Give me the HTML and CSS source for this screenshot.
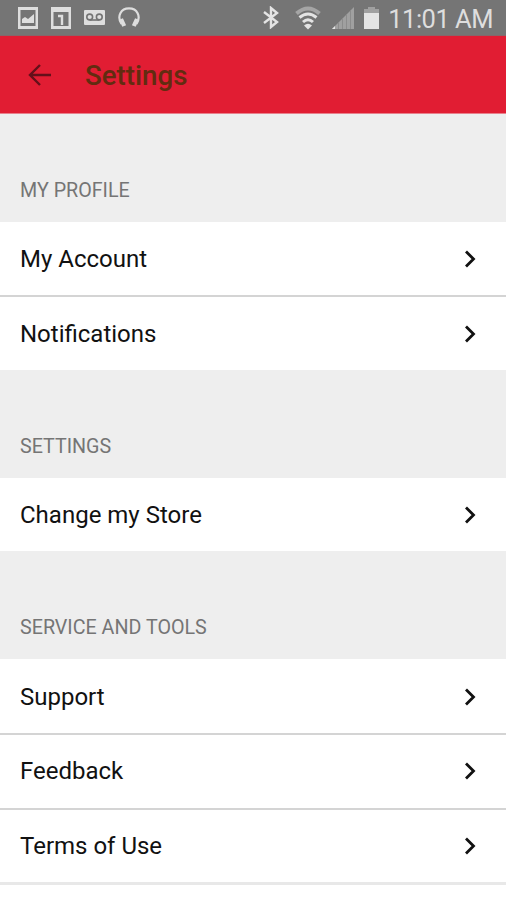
FILE: index.html
```html
<!DOCTYPE html>
<html lang="en">
<head>
  <meta charset="UTF-8" />
  <meta name="viewport" content="width=device-width, initial-scale=1.0"/>
  <title>Settings</title>
  <link rel="stylesheet" href="styles.css">
</head>
<body>
  <div class="status-bar">
    <div class="status-left">
      <svg width="20" height="22" viewBox="0 0 20 22"><path fill="#dedede" fill-rule="evenodd" d="M0 0h20v22H0zM2.5 3v16h15V3z"/><path fill="#dedede" d="M4 16v-4l3-2 3 2 6-5v9z"/></svg>
      <svg width="20" height="22" viewBox="0 0 20 22"><path fill="#dedede" fill-rule="evenodd" d="M0 0h20v22H0zM2.5 5v14h15V5z"/><path fill="none" stroke="#dedede" stroke-width="2.4" d="M7 9h4v9"/></svg>
      <svg width="21" height="15" viewBox="0 0 21 15"><rect width="21" height="15" rx="1" fill="#dedede"/><g fill="none" stroke="#737373" stroke-width="1.6"><circle cx="5.7" cy="7" r="2.9"/><circle cx="15.3" cy="7" r="2.9"/><path d="M5.700 10h9.600"/></g></svg>
      <svg width="22" height="21" viewBox="0 0 22 21"><path fill="none" stroke="#dedede" stroke-width="2.2" d="M3.5 17C-1.5 9 3 1.4 11 1.4S23.5 9 18.5 17"/><path fill="none" stroke="#dedede" stroke-width="4.2" d="M3 12l3.200 7M19 12l-3.200 7"/></svg>
    </div>
    <div class="status-right">
      <svg class="bluetooth" width="16" height="23" viewBox="0 0 16 23"><path fill="none" stroke="#e4e4e4" stroke-width="2.4" d="M1 6l13 10-6 5V2l6 5L1 17"/></svg>
      <svg class="wifi" width="26" height="24" viewBox="0 0 26 24"><g fill="none" stroke="#e4e4e4" stroke-width="3"><path stroke="#a5a5a5" stroke-width="4" d="M1.500 7.500q11.500-10 23 0"/><path d="M4.500 11.500q8.500-7 17 0M8 16q5-4.500 10 0"/></g><path fill="#e4e4e4" d="M9 19.500q4-3.500 8 0l-4 4z"/></svg>
      <svg class="signal" width="22" height="22" viewBox="0 0 22 22"><path fill="#a0a0a0" d="M0 22L22 0v22z"/><path stroke="#8c8c8c" stroke-width="1" d="M6.500 16v6M10.500 12v10M14.500 8v14M18.500 4v18"/><path fill="#e4e4e4" d="M0 22l3-3v3z"/></svg>
      <svg class="battery" width="15" height="22" viewBox="0 0 15 22"><path fill="#a0a0a0" d="M4 0h7v2h4v4H0V2h4z"/><path fill="#e4e4e4" d="M0 6h15v16H0z"/></svg>
      <span class="clock">11:01 AM</span>
    </div>
  </div>

  <header class="header">
    <svg class="back" width="24" height="24" viewBox="0 0 24 24"><path fill="none" stroke="#64101a" stroke-width="2.4" d="M24 12H3M13 2L3 12l10 10"/></svg>
    <h1>Settings</h1>
  </header>

  <main>
    <h2>MY PROFILE</h2>
    <ul>
      <li><span>My Account</span><svg class="chevron" viewBox="0 0 12 18"><path d="M2 1.5L9.500 9 2 16.500"/></svg></li>
      <li><span>Notifications</span><svg class="chevron" viewBox="0 0 12 18"><path d="M2 1.5L9.500 9 2 16.500"/></svg></li>
    </ul>

    <h2>SETTINGS</h2>
    <ul>
      <li><span>Change my Store</span><svg class="chevron" viewBox="0 0 12 18"><path d="M2 1.5L9.500 9 2 16.500"/></svg></li>
    </ul>

    <h2>SERVICE AND TOOLS</h2>
    <ul class="tools">
      <li><span>Support</span><svg class="chevron" viewBox="0 0 12 18"><path d="M2 1.5L9.500 9 2 16.500"/></svg></li>
      <li><span>Feedback</span><svg class="chevron" viewBox="0 0 12 18"><path d="M2 1.5L9.500 9 2 16.500"/></svg></li>
      <li><span>Terms of Use</span><svg class="chevron" viewBox="0 0 12 18"><path d="M2 1.5L9.500 9 2 16.500"/></svg></li>
    </ul>
  </main>
</body>
</html>
```
FILE: styles.css
```css
* {
  box-sizing: border-box;
}

body {
  font-family: Roboto, sans-serif;
  background: #fff;
  margin: 0;
  padding: 0;
  height: 900px;
  overflow: hidden;
}

svg {
  display: block;
  flex-shrink: 0;
}

.status-bar {
  display: flex;
  justify-content: space-between;
  height: 36px;
  background: #757575;
  border-bottom: 1px solid #88666a;
  padding: 0 13px 0 18px;
}

.status-left, .status-right {
  display: flex;
  align-items: center;
}

.status-left {
  gap: 13px;
}

.bluetooth {
  margin-right: 16px;
}

.wifi {
  margin-right: 11px;
}

.signal {
  margin-right: 10px;
}

.battery {
  margin-right: 9px;
}

.clock {
  color: #dedede;
  font-size: 25.5px;
  letter-spacing: -0.5px;
  line-height: 36px;
  padding-top: 2px;
  white-space: nowrap;
}

.header {
  display: flex;
  align-items: center;
  height: 78px;
  background: #e11d33;
  border-bottom: 1px solid #e8808c;
  padding-left: 27px;
}

.header h1 {
  margin: 2px 0 0 34px;
  color: #622c10;
  font-size: 27.7px;
  font-weight: 500;
}

h2 {
  height: 108px;
  margin: 0;
  padding: 65px 20px 0;
  background: #eee;
  color: #757575;
  font-size: 19.7px;
  font-weight: 400;
  line-height: 24px;
}

ul {
  list-style: none;
  margin: 0;
  padding: 0;
}

li {
  display: flex;
  align-items: center;
  justify-content: space-between;
  height: 73px;
  padding: 1px 30px 0 20px;
  color: #111;
  font-size: 24px;
}

li + li {
  height: 75px;
  padding-top: 0;
  border-top: 2px solid #d4d4d4;
}

.tools {
  border-bottom: 3px solid #e8e8e8;
}

.tools li:first-child {
  height: 74px;
}

.tools li + li {
  height: 74.5px;
}

.chevron {
  width: 12px;
  height: 18px;
  fill: none;
  stroke: #111;
  stroke-width: 2.8;
}
```
